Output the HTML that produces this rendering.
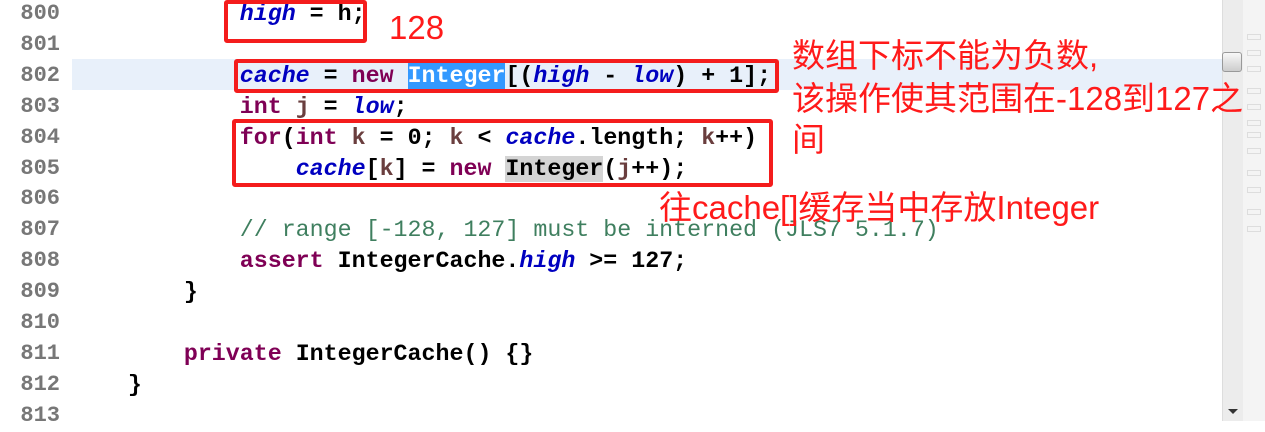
<!DOCTYPE html>
<html><head><meta charset="utf-8"><style>
body{margin:0;width:1265px;height:421px;overflow:hidden;background:#fff;position:relative;font-family:"Liberation Mono",monospace}
.ln{position:absolute;left:0;top:-1px;width:70px;text-align:right;color:#777;font-size:22px;line-height:30.9px;font-weight:bold}
.ln div{padding-right:10px}
.code{position:absolute;left:72px;top:-1px;font-size:23.3px;line-height:30.9px;white-space:pre;color:#000;font-weight:bold}
.k{color:#7f0055}.f{color:#0000c0;font-style:italic}.v{color:#6a3e3e}.c{color:#3f7f5f;font-weight:normal}
.hl{position:absolute;left:72px;top:59px;width:1150px;height:31px;background:#e8f0fa}
.sel{background:#3399ff;color:#fff}
.gr{background:#d4d4d4}
.box{position:absolute;border:4px solid #f41c1c;border-radius:3px;box-sizing:border-box;z-index:5}
.ann{position:absolute;color:#ff1a1a;font-family:"Liberation Sans","Noto Sans CJK SC",sans-serif;font-size:33px;line-height:44px;white-space:nowrap;z-index:5}
.sb{position:absolute;left:1222px;top:0;width:21px;height:421px;background:#ececec;border-left:1px solid #ddd}
.thumb{position:absolute;left:1222px;top:52px;width:20px;height:20px;background:linear-gradient(#f8f8f8,#ccc);border:1px solid #999;border-radius:3px;box-sizing:border-box}
.rl{position:absolute;left:1243px;top:0;width:22px;height:421px;background:#f4f4f4}
.tk{position:absolute;left:1247px;width:12px;height:4px;border:1px solid #ddd}
</style></head><body>
<div class="hl"></div>
<div class="ln"><div>800</div><div>801</div><div>802</div><div>803</div><div>804</div><div>805</div><div>806</div><div>807</div><div>808</div><div>809</div><div>810</div><div>811</div><div>812</div><div>813</div></div>
<div class="code"><div>            <span class="f">high</span> = h;</div><div> </div><div>            <span class="f">cache</span> = <span class="k">new</span> <span class="sel">Integer</span>[(<span class="f">high</span> - <span class="f">low</span>) + 1];</div><div>            <span class="k">int</span> <span class="v">j</span> = <span class="f">low</span>;</div><div>            <span class="k">for</span>(<span class="k">int</span> <span class="v">k</span> = 0; <span class="v">k</span> &lt; <span class="f">cache</span>.length; <span class="v">k</span>++)</div><div>                <span class="f">cache</span>[<span class="v">k</span>] = <span class="k">new</span> <span class="gr">Integer</span>(<span class="v">j</span>++);</div><div> </div><div>            <span class="c">// range [-128, 127] must be interned (JLS7 5.1.7)</span></div><div>            <span class="k">assert</span> IntegerCache.<span class="f">high</span> &gt;= 127;</div><div>        }</div><div> </div><div>        <span class="k">private</span> IntegerCache() {}</div><div>    }</div><div> </div></div>
<div class="sb"></div><div class="thumb"></div>
<div class="rl"></div>
<div class="tk" style="top:34px"></div><div class="tk" style="top:50px"></div><div class="tk" style="top:66px"></div><div class="tk" style="top:88px"></div><div class="tk" style="top:104px"></div><div class="tk" style="top:120px"></div><div class="tk" style="top:132px"></div><div class="tk" style="top:148px"></div><div class="tk" style="top:170px"></div><div class="tk" style="top:187px"></div><div class="tk" style="top:209px"></div><div class="tk" style="top:226px"></div>
<div style="position:absolute;left:1228px;top:409px;width:0;height:0;border-left:5px solid transparent;border-right:5px solid transparent;border-top:5px solid #333"></div>
<div class="box" style="left:224px;top:0;width:143px;height:43px"></div>
<div class="box" style="left:234px;top:59px;width:545px;height:34px"></div>
<div class="box" style="left:232px;top:119px;width:541px;height:68px"></div>
<div class="ann" style="left:389px;top:6px">128</div>
<div class="ann" style="left:792px;top:34px">数组下标不能为负数,</div>
<div class="ann" style="left:792px;top:77px">该操作使其范围在-128到127之</div>
<div class="ann" style="left:792px;top:118px">间</div>
<div class="ann" style="left:659px;top:186px">往cache[]缓存当中存放Integer</div>
</body></html>
